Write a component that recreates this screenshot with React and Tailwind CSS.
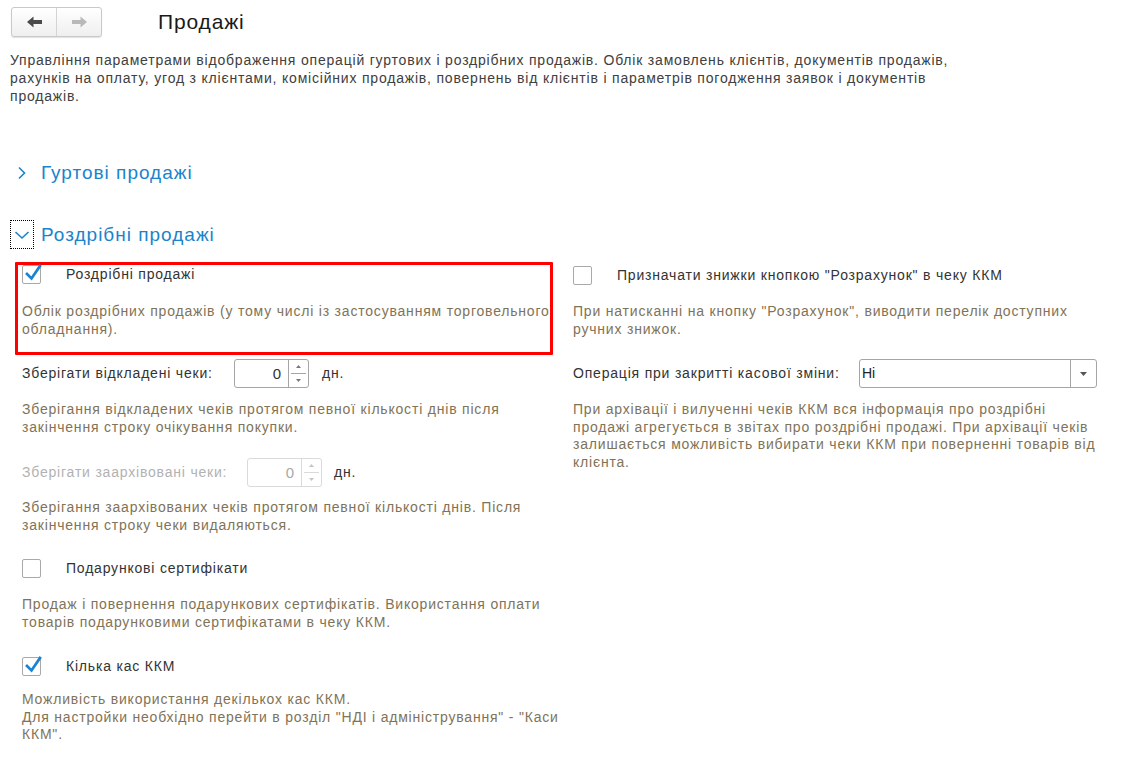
const note = 'text-[#7f7358]';

function Check({ checked }) {
  return (
    <span className="relative inline-block w-[19px] h-[19px] shrink-0 rounded-[2px] border border-[#a9a9a9] bg-white">
      {checked && (
        <svg className="absolute left-[1px] -top-[4px]" width="19" height="21" viewBox="0 0 19 21">
          <path d="M3 12 L7.5 16.5 L16 4" fill="none" stroke="#1b84d0" strokeWidth="2.7" strokeLinecap="square" />
        </svg>
      )}
    </span>
  );
}

function CheckRow({ checked, label, className = '' }) {
  return (
    <div className={`flex items-center h-[21px] ${className}`}>
      <Check checked={checked} />
      <span className="ml-[25px] text-[#333]">{label}</span>
    </div>
  );
}

function Spin({ disabled }) {
  const border = disabled ? 'border-[#dadada]' : 'border-[#a5a5a5]';
  const tri = disabled ? '#c4c4c4' : '#777';
  return (
    <div className={`flex h-[29px] w-[75px] rounded-[3px] border ${border} bg-white`}>
      <div className={`flex-1 text-right pr-[6px] leading-[27px] text-[15px] ${disabled ? 'text-[#a8a8a8]' : 'text-[#333]'}`}>0</div>
      <div className={`w-[20px] flex flex-col border-l ${border}`}>
        <div className="flex-1 flex items-center justify-center">
          <svg width="5" height="3" viewBox="0 0 5 3"><path d="M0 3 L2.5 0 L5 3 Z" fill={tri} /></svg>
        </div>
        <div className={`border-t ${border} mx-[2px]`} />
        <div className="flex-1 flex items-center justify-center">
          <svg width="5" height="3" viewBox="0 0 5 3"><path d="M0 0 L2.5 3 L5 0 Z" fill={tri} /></svg>
        </div>
      </div>
    </div>
  );
}

function Arrow({ dir, color }) {
  return (
    <svg width="15" height="12" viewBox="0 0 15 12" className={dir === 'right' ? 'rotate-180' : ''}>
      <path d="M0 6 L6.5 0.5 L6.5 4 L15 4 L15 8 L6.5 8 L6.5 11.5 Z" fill={color} />
    </svg>
  );
}

export default function App() {
  return (
    <div className="w-[1125px] h-[762px] overflow-hidden bg-white text-[14px] leading-[17.5px] tracking-[0.8px] text-[#333]" style={{ fontFamily: '"Liberation Sans", Arial, sans-serif' }}>
      <div className="flex items-center pt-[7px] pl-[11px]">
        <div className="flex h-[30px] w-[91px] rounded-[3px] border border-[#c9c9c9] bg-gradient-to-b from-white to-[#efefef] shadow-[0_1px_1px_rgba(0,0,0,0.12)]">
          <div className="flex-1 flex items-center justify-center border-r border-[#d4d4d4]">
            <Arrow dir="left" color="#4a4a4a" />
          </div>
          <div className="flex-1 flex items-center justify-center">
            <Arrow dir="right" color="#b9b9b9" />
          </div>
        </div>
        <h1 className="ml-[56px] text-[21px] leading-[28px] tracking-[0.85px] text-[#1a1a1a]">Продажі</h1>
      </div>

      <p className="mt-[14px] ml-[10px] w-[965px] leading-[18px] text-[#404040]">
        Управління параметрами відображення операцій гуртових і роздрібних продажів. Облік замовлень клієнтів, документів продажів, рахунків на оплату, угод з клієнтами, комісійних продажів, повернень від клієнтів і параметрів погодження заявок і документів продажів.
      </p>

      <div className="mt-[53px] ml-[10px] flex items-center h-[29px]">
        <div className="w-[24px] flex justify-center">
          <svg width="10" height="14" viewBox="0 0 10 14"><path d="M2 1.5 L7.5 7 L2 12.5" fill="none" stroke="#1a84cc" strokeWidth="1.6" /></svg>
        </div>
        <span className="ml-[7px] text-[19px] tracking-[1px] text-[#1a84cc]">Гуртові продажі</span>
      </div>

      <div className="mt-[33px] ml-[10px] flex items-center h-[29px]">
        <div className="w-[24px] h-[29px] flex items-center justify-center border border-dotted border-black">
          <svg width="16" height="10" viewBox="0 0 16 10"><path d="M1.5 2 L8 8 L14.5 2" fill="none" stroke="#1a84cc" strokeWidth="1.6" /></svg>
        </div>
        <span className="ml-[7px] text-[19px] tracking-[1px] text-[#1a84cc]">Роздрібні продажі</span>
      </div>

      <div className="mt-[15px] ml-[22px] grid grid-cols-[542px_524px] gap-x-[9px]">
        <div>
          <div className="relative">
            <div className="pointer-events-none absolute -left-[7px] -top-[2px] w-[538px] h-[93px] border-[3px] border-[#f00] rounded-[1px]" />
            <CheckRow checked label="Роздрібні продажі" />
            <p className={`mt-[18px] w-[533px] ${note}`}>Облік роздрібних продажів (у тому числі із застосуванням торговельного обладнання).</p>
          </div>

          <div className="mt-[21px] flex items-center">
            <span className="w-[212px]">Зберігати відкладені чеки:</span>
            <Spin />
            <span className="ml-[13px]">дн.</span>
          </div>
          <p className={`mt-[13px] ${note}`}>Зберігання відкладених чеків протягом певної кількості днів після закінчення строку очікування покупки.</p>

          <div className="mt-[22px] flex items-center">
            <span className="w-[225px] text-[#b2b2b2]">Зберігати заархівовані чеки:</span>
            <Spin disabled />
            <span className="ml-[12px]">дн.</span>
          </div>
          <p className={`mt-[12px] ${note}`}>Зберігання заархівованих чеків протягом певної кількості днів. Після закінчення строку чеки видаляються.</p>

          <CheckRow label="Подарункові сертифікати" className="mt-[24px]" />
          <p className={`mt-[17px] ${note}`}>Продаж і повернення подарункових сертифікатів. Використання оплати товарів подарунковими сертифікатами в чеку ККМ.</p>

          <CheckRow checked label="Кілька кас ККМ" className="mt-[25px]" />
          <p className={`mt-[14px] ${note}`}>
            Можливість використання декількох кас ККМ.
            <br />
            Для настройки необхідно перейти в розділ "НДІ і адміністрування" - "Каси ККМ".
          </p>
        </div>

        <div>
          <CheckRow label={'Призначати знижки кнопкою "Розрахунок" в чеку ККМ'} className="mt-[1px]" />
          <p className={`mt-[17px] ${note}`}>При натисканні на кнопку "Розрахунок", виводити перелік доступних ручних знижок.</p>

          <div className="mt-[21px] flex items-center">
            <span className="w-[286px]">Операція при закритті касової зміни:</span>
            <div className="flex h-[29px] w-[238px] rounded-[3px] border border-[#a5a5a5] bg-white">
              <div className="flex-1 pl-[2px] leading-[27px] tracking-normal text-[#222]">Ні</div>
              <div className="w-[26px] border-l border-[#a5a5a5] flex items-center justify-center">
                <svg width="7" height="4" viewBox="0 0 7 4"><path d="M0 0 L3.5 4 L7 0 Z" fill="#555" /></svg>
              </div>
            </div>
          </div>
          <p className={`mt-[13px] ${note}`}>При архівації і вилученні чеків ККМ вся інформація про роздрібні продажі агрегується в звітах про роздрібні продажі. При архівації чеків залишається можливість вибирати чеки ККМ при поверненні товарів від клієнта.</p>
        </div>
      </div>
    </div>
  );
}
